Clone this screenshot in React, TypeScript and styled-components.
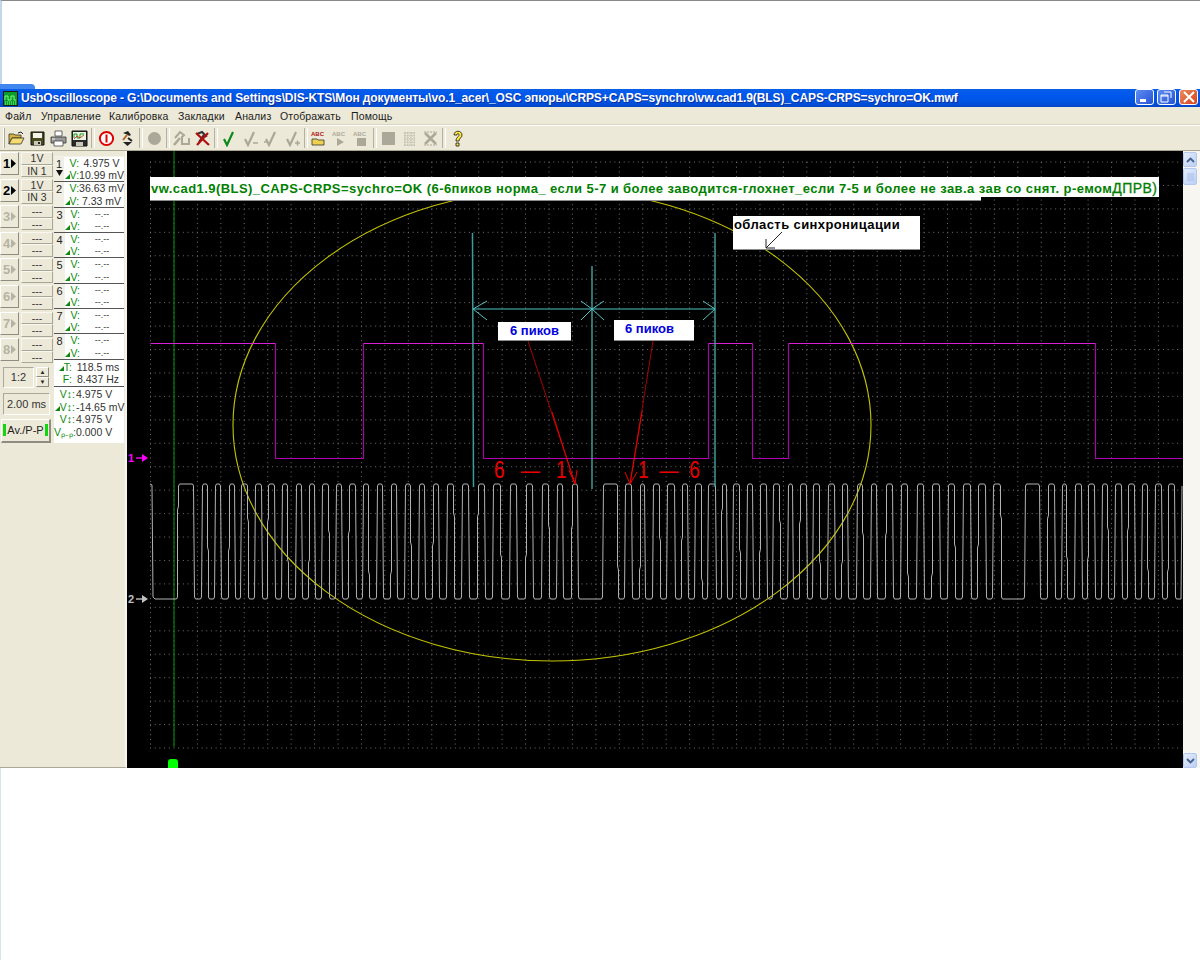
import React from "react";
import styled, { createGlobalStyle } from "styled-components";

const GlobalStyle = createGlobalStyle`
  html, body {
    margin: 0;
    padding: 0;
    background: #ffffff;
    overflow: hidden;
  }
  * {
    box-sizing: border-box;
  }
`;

const Page = styled.div`
  width: 1200px;
  height: 960px;
  display: flex;
  flex-direction: column;
  background: #ffffff;
  font-family: "Liberation Sans", Arial, sans-serif;
`;

const TopBand = styled.div`
  height: 84px;
  border-top: 1px solid #8a8a8a;
  border-left: 2px solid #c4d6ee;
`;

const TitleTab = styled.div`
  width: 35px;
  height: 5px;
  background: #3f86ee;
  border-top-right-radius: 4px;
`;

const AppWindow = styled.div`
  height: 679px;
  display: flex;
  flex-direction: column;
  background: #ece9d8;
`;

const TitleBar = styled.div`
  height: 18px;
  display: flex;
  align-items: center;
  padding: 0 2px 0 3px;
  background: linear-gradient(180deg, #0a5fe6 0%, #0058ee 30%, #0054e3 70%, #0346c6 100%);
`;

const TitleText = styled.div`
  flex: 1;
  margin-left: 3px;
  color: #ffffff;
  font-size: 12px;
  font-weight: 700;
  letter-spacing: -0.11px;
  white-space: nowrap;
  text-shadow: 1px 1px 0 #0a2f9c;
`;

const WindowButton = styled.div<{ $close?: boolean }>`
  width: 19px;
  height: 16px;
  margin: 0 0 2px 3px;
  display: flex;
  align-items: center;
  justify-content: center;
  border: 1px solid #ffffff;
  border-radius: 3px;
  background: ${(p) =>
    p.$close
      ? "linear-gradient(135deg, #ea8a62, #d8431c)"
      : "linear-gradient(135deg, #5f8cf0, #2454d8)"};
`;

const MenuBar = styled.div`
  height: 18px;
  display: flex;
  align-items: center;
  padding-left: 5px;
  border-bottom: 1px solid #d8d4c0;
`;

const MenuItem = styled.span<{ $w: number }>`
  width: ${(p) => p.$w}px;
  font-size: 10.5px;
  letter-spacing: 0.15px;
  color: #1c1c1c;
  white-space: nowrap;
`;

const ToolBar = styled.div`
  height: 26px;
  display: flex;
  align-items: center;
  padding-left: 6px;
  border-top: 1px solid #ffffff;
  border-bottom: 1px solid #a8a590;
`;

const Gripper = styled.div`
  width: 2px;
  height: 20px;
  margin: 0 1px 0 -3px;
  border-left: 1px solid #ffffff;
  border-right: 1px solid #aca899;
`;

const ToolButton = styled.div`
  width: 21px;
  height: 20px;
  display: flex;
  align-items: center;
  justify-content: center;
`;

const ToolSep = styled.div`
  width: 6px;
  height: 20px;
  display: flex;
  justify-content: center;
  &::after {
    content: "";
    width: 2px;
    height: 100%;
    border-left: 1px solid #b4b19f;
    border-right: 1px solid #ffffff;
  }
`;

const Main = styled.div`
  flex: 1;
  min-height: 0;
  display: flex;
`;

const Sidebar = styled.div`
  width: 127px;
  display: flex;
  padding-top: 1px;
  border-right: 2px solid #f6f5ee;
  border-bottom: 1px solid #aca899;
  background: #ece9d8;
`;

const ChannelColumn = styled.div`
  width: 53px;
  display: flex;
  flex-direction: column;
`;

const ChannelRow = styled.div`
  height: 26.6px;
  display: flex;
  gap: 2px;
`;

const ChannelButton = styled.div<{ $on: boolean }>`
  width: 19px;
  height: 23px;
  display: flex;
  align-items: center;
  justify-content: center;
  gap: 1px;
  font-size: 13px;
  font-weight: 700;
  color: ${(p) => (p.$on ? "#000000" : "#b6b3a2")};
  background: #ece9d8;
  border-top: 1px solid #ffffff;
  border-left: 1px solid #ffffff;
  border-right: 1px solid #8f8d80;
  border-bottom: 1px solid #8f8d80;
`;

const ChannelInfo = styled.div`
  width: 32px;
  height: 25px;
  display: flex;
  flex-direction: column;
`;

const ChannelCell = styled.div`
  height: 50%;
  display: flex;
  align-items: center;
  justify-content: center;
  font-size: 10.5px;
  line-height: 1;
  color: #333333;
  border-top: 1px solid #f8f7f0;
  border-left: 1px solid #f8f7f0;
  border-right: 1px solid #a9a796;
  border-bottom: 1px solid #a9a796;
`;

const RatioRow = styled.div`
  display: flex;
  gap: 2px;
  margin: 2px 0 0 3px;
`;

const SunkenBox = styled.div<{ $w: number; $h: number }>`
  width: ${(p) => p.$w}px;
  height: ${(p) => p.$h}px;
  display: flex;
  align-items: center;
  justify-content: center;
  font-size: 11px;
  color: #333333;
  border-top: 1px solid #aca899;
  border-left: 1px solid #aca899;
  border-right: 1px solid #ffffff;
  border-bottom: 1px solid #ffffff;
`;

const SpinColumn = styled.div`
  display: flex;
  flex-direction: column;
`;

const SpinButton = styled.div`
  width: 13px;
  height: 10px;
  display: flex;
  align-items: center;
  justify-content: center;
  font-size: 6px;
  color: #222222;
  border-top: 1px solid #ffffff;
  border-left: 1px solid #ffffff;
  border-right: 1px solid #8f8d80;
  border-bottom: 1px solid #8f8d80;
`;

const SpeedBox = styled(SunkenBox)`
  margin: 5px 0 0 3px;
`;

const ModeButton = styled.div`
  width: 50px;
  height: 24px;
  margin: 4px 0 0 1px;
  display: flex;
  align-items: center;
  justify-content: center;
  gap: 1px;
  font-size: 11px;
  color: #222222;
  border-top: 1px solid #ffffff;
  border-left: 1px solid #ffffff;
  border-right: 2px solid #8f8d80;
  border-bottom: 2px solid #8f8d80;
`;

const ModeBar = styled.span`
  width: 3px;
  height: 12px;
  background: #0fd80f;
`;

const ReadoutPanel = styled.div`
  width: 70px;
  height: 287px;
  margin: 4px 0 0 1px;
  background: #ffffff;
  border-top: 1px solid #f4f3ea;
`;

const ReadoutRow = styled.div`
  height: 25.35px;
  display: flex;
  border-bottom: 1px solid #555555;
`;

const ReadoutNumber = styled.div`
  width: 11px;
  display: flex;
  flex-direction: column;
  align-items: center;
  padding-top: 2px;
  font-size: 11px;
  line-height: 11px;
  color: #222222;
  background: #f1efe3;
`;

const ReadoutLines = styled.div`
  flex: 1;
  display: flex;
  flex-direction: column;
  justify-content: space-around;
`;

const ReadoutLine = styled.div`
  display: flex;
  align-items: center;
  height: 12px;
  font-size: 10.5px;
  line-height: 12px;
  color: #333333;
  white-space: nowrap;
`;

const ReadoutTag = styled.span<{ $w?: number }>`
  width: ${(p) => p.$w ?? 15}px;
  flex: none;
  text-align: right;
  color: #0d8a0d;
  font-size: 10.5px;
`;

const ReadoutValue = styled.span<{ $dim?: boolean }>`
  flex: 1;
  text-align: center;
  font-size: ${(p) => (p.$dim ? "9px" : "10.5px")};
`;

const TimeBlock = styled.div`
  height: 27px;
  padding: 1px 0 0 3px;
  border-bottom: 1px solid #555555;
`;

const StatsBlock = styled.div`
  padding: 1px 0 0 0;
`;

const StatLine = styled(ReadoutLine)`
  height: 12.6px;
  gap: 1px;
`;

const Scope = styled.div`
  flex: 1;
  position: relative;
  background: #000000;
  overflow: hidden;
`;

const ScopeChart = styled.svg`
  display: block;
  width: 100%;
  height: 100%;
`;

const Banner = styled.div`
  position: absolute;
  left: 23px;
  top: 26px;
  width: 1009px;
  height: 20px;
  background: #ffffff;
  color: #008000;
  font-size: 13px;
  font-weight: 700;
  line-height: 23px;
  letter-spacing: 0.44px;
  white-space: nowrap;
`;

const BannerEdge = styled.div`
  position: absolute;
  left: 23px;
  top: 26px;
  width: 831px;
  height: 24px;
  background: #ffffff;
  border-bottom: 1px solid #8c8c8c;
`;

const BannerText = styled.span`
  margin-left: 1px;
`;

const BannerTail = styled.span`
  font-weight: 400;
  font-size: 14px;
  -webkit-text-stroke: 0.3px #008000;
`;

const NoteBox = styled.div`
  position: absolute;
  left: 606px;
  top: 65px;
  width: 187px;
  height: 34px;
  padding-left: 1px;
  background: #ffffff;
  border-bottom: 1px solid #8c8c8c;
  color: #000000;
  font-size: 13px;
  font-weight: 700;
  line-height: 18px;
  letter-spacing: 0.4px;
`;

const NoteArrow = styled.svg`
  position: absolute;
  left: 32px;
  top: 15px;
`;

const PeakLabel = styled.div<{ $left: number; $top: number; $w: number; $h: number; $pad: number }>`
  position: absolute;
  left: ${(p) => p.$left}px;
  top: ${(p) => p.$top}px;
  width: ${(p) => p.$w}px;
  height: ${(p) => p.$h}px;
  padding-left: ${(p) => p.$pad}px;
  background: #ffffff;
  color: #0000e0;
  font-size: 13px;
  font-weight: 700;
  line-height: 18px;
  border-bottom: 1px solid #8c8c8c;
`;

const PeakCount = styled.div<{ $left: number }>`
  position: absolute;
  left: ${(p) => p.$left}px;
  top: 305px;
  color: #e80000;
  font-size: 24px;
  line-height: 28px;
  white-space: pre;
  transform: scaleX(0.8);
  transform-origin: left center;
`;

const ChannelMarker = styled.div<{ $top: number; $color: string }>`
  position: absolute;
  left: 1px;
  top: ${(p) => p.$top}px;
  display: flex;
  align-items: center;
  gap: 2px;
  color: ${(p) => p.$color};
  font-size: 11px;
  font-weight: 700;
  line-height: 12px;
`;

const TriggerThumb = styled.div`
  position: absolute;
  left: 41px;
  bottom: 0;
  width: 10px;
  height: 9px;
  background: #00ff00;
  border-radius: 3px 3px 0 0;
`;

const ScrollBar = styled.div`
  width: 17px;
  display: flex;
  flex-direction: column;
  padding-right: 3px;
  background: #f7f6f0;
`;

const ScrollButton = styled.div`
  height: 15px;
  margin-top: 1px;
  display: flex;
  align-items: center;
  justify-content: center;
  border: 1px solid #b4c8f0;
  border-radius: 2px;
  background: linear-gradient(135deg, #e4edfc, #bccff4);
`;

const ScrollThumb = styled(ScrollButton)`
  height: 17px;
`;

const ScrollTrack = styled.div`
  flex: 1;
`;

const BottomBand = styled.div`
  flex: 1;
  border-left: 1px solid #d8e6e0;
`;

const titleText =
  "UsbOscilloscope - G:\\Documents and Settings\\DIS-KTS\\Мон документы\\vo.1_acer\\_OSC эпюры\\CRPS+CAPS=synchro\\vw.cad1.9(BLS)_CAPS-CRPS=sychro=OK.mwf";

const menuItems: [string, number][] = [
  ["Файл", 36],
  ["Управление", 68],
  ["Калибровка", 69],
  ["Закладки", 57],
  ["Анализ", 45],
  ["Отображать", 71],
  ["Помощь", 50],
];

// [rise, fall] of channel 2, in page pixels
const pulses: [number, number][] = [
  [178, 194], [202, 208], [215, 221], [229, 235], [241, 248], [255, 262], [268, 275], [282, 288],
  [296, 302], [309, 315], [322, 329], [336, 342], [349, 356], [363, 369], [377, 383], [391, 397],
  [405, 411], [419, 425], [433, 439], [447, 454], [462, 469], [478, 485], [493, 501], [510, 517],
  [526, 533], [542, 549], [557, 563], [572, 578], [603, 618], [625, 632], [640, 645], [653, 660],
  [667, 675], [682, 688], [695, 702], [708, 716], [722, 727], [733, 740], [747, 753], [760, 767],
  [773, 780], [788, 793], [800, 807], [813, 820], [828, 835], [842, 848], [857, 863], [871, 877],
  [886, 893], [901, 908], [917, 924], [932, 940], [948, 955], [963, 971], [978, 986], [993, 1001],
  [1025, 1040], [1048, 1055], [1062, 1067], [1075, 1082], [1088, 1095], [1102, 1108], [1115, 1122],
  [1128, 1135], [1142, 1148], [1155, 1162], [1168, 1175],
];

function buildGreyTrace() {
  let d = "M150 484 L152 485 L153 597 L155 599";
  pulses.forEach(([rise, fall], i) => {
    const k = 510 + ((i * 37) % 70);
    d += ` L${rise - 1.5} 599 L${rise - 0.5} 597`;
    d += i % 3 === 0 ? ` L${rise - 0.5} ${k} L${rise + 0.5} ${k - 4}` : "";
    d += ` L${rise + 0.5} 486 L${rise + 1.5} 484`;
    d += ` L${fall - 1.5} 484 L${fall - 0.5} 486`;
    d += i % 3 === 1 ? ` L${fall - 0.5} ${k} L${fall + 0.5} ${k + 4}` : "";
    d += ` L${fall + 0.5} 597 L${fall + 1.5} 599`;
  });
  d += " L1181 599 L1182 486";
  return d;
}

const magentaHigh = "M150 343 L275 343 M363 343 L483 343 M708 343 L752 343 M788 343 L1095 343";
const magentaLow =
  "M275 343 L275 458 L363 458 L363 343 M483 343 L483 458 L708 458 L708 343 M752 343 L752 458 L788 458 L788 343 M1095 343 L1095 458 L1182 458";

const gridXs = Array.from({ length: 44 }, (_, i) => 150.5 + i * 23.44);
const gridYs = Array.from({ length: 26 }, (_, i) => 162 + i * 23.44);

function ScopeDrawing() {
  return (
    <ScopeChart viewBox="127 151 1056 617" preserveAspectRatio="none">
      <g stroke="#707070" strokeWidth="1" strokeDasharray="1 3.69" fill="none">
        {gridYs.map((y) => (
          <line key={y} x1="150" y1={y} x2="1182" y2={y} />
        ))}
        {gridXs.map((x) => (
          <line key={x} x1={x} y1="162" x2={x} y2="747" />
        ))}
      </g>
      <line x1="174" y1="151" x2="174" y2="747" stroke="#008000" strokeWidth="1.2" />
      <ellipse cx="552" cy="425" rx="319" ry="236" fill="none" stroke="#c4c400" strokeWidth="1.1" />
      <g transform="translate(0.5 0.5)" fill="none" strokeWidth="1.1">
        <path d={magentaLow} stroke="#b000b0" />
        <path d={magentaHigh} stroke="#d820d8" />
      </g>
      <path d={buildGreyTrace()} fill="none" stroke="#b2b2b2" strokeWidth="1" />
      <g fill="none" stroke="#3f9a9a" strokeWidth="1.5">
        <line x1="472.5" y1="233" x2="473.5" y2="487" />
        <line x1="592" y1="266" x2="592" y2="489" />
        <line x1="715" y1="233" x2="715" y2="487" />
      </g>
      <g fill="none" stroke="#52c4c4" strokeWidth="1">
        <line x1="473" y1="309" x2="715" y2="309" />
        <path d="M487 301 L473 309 L487 320" />
        <path d="M581 301 L592 309 L581 320" />
        <path d="M604 301 L592 309 L604 320" />
        <path d="M703 320 L715 309 L703 301" />
      </g>
      <g fill="none" stroke="#a80000" strokeWidth="1">
        <line x1="528" y1="341" x2="575" y2="484" />
        <line x1="653" y1="341" x2="630" y2="484" />
      </g>
      <g fill="none" stroke="#f00000" strokeWidth="1">
        <path d="M569 470 L575 484 L577 470" />
        <path d="M625 472 L630 484 L637 472" />
        <line x1="552" y1="412" x2="575" y2="484" />
        <line x1="642" y1="412" x2="630" y2="484" />
      </g>
    </ScopeChart>
  );
}

function ToolIcon({ children }: { children: React.ReactNode }) {
  return (
    <ToolButton>
      <svg width="17" height="17" viewBox="0 0 17 17">
        {children}
      </svg>
    </ToolButton>
  );
}

const GREY = "#aca899";

function OpenIcon() {
  return (
    <ToolIcon>
      <path d="M1 4h5l1 1h6v3H4L1 14z" fill="#d6b23c" stroke="#333" strokeWidth="0.8" />
      <path d="M1 14L4 8h12l-3 6z" fill="#f4dc70" stroke="#333" strokeWidth="0.8" />
      <path d="M10 3l3-1 2 2" fill="none" stroke="#222" strokeWidth="1" />
    </ToolIcon>
  );
}

function SaveIcon() {
  return (
    <ToolIcon>
      <path d="M2 2h13v13H2z" fill="#4a4a20" stroke="#111" />
      <path d="M4 3h9v5H4z" fill="#f4f4ea" />
      <path d="M5 11h7v4H5z" fill="#c8c8b8" />
      <path d="M9 12h2v2H9z" fill="#222" />
    </ToolIcon>
  );
}

function PrintIcon() {
  return (
    <ToolIcon>
      <path d="M5 1h7v5H5z" fill="#fff" stroke="#444" strokeWidth="0.8" />
      <path d="M1 7h15v6H1z" fill="#9a9a9a" stroke="#333" strokeWidth="0.8" />
      <path d="M4 11h9v5H4z" fill="#fff" stroke="#444" strokeWidth="0.8" />
      <path d="M2 9h3" stroke="#eee" />
    </ToolIcon>
  );
}

function ScopeSaveIcon() {
  return (
    <ToolIcon>
      <path d="M1 1h15v15H1z" fill="#2a2a2a" stroke="#111" />
      <path d="M2 2h13v8H2z" fill="#e8f4e4" />
      <path d="M3 8V4h3v4h3V4h4" fill="none" stroke="#10a010" />
      <path d="M3 9l3-3 3 2 4-3" fill="none" stroke="#e02020" strokeWidth="0.8" />
      <path d="M5 12h7v4H5z" fill="#c8c8b8" />
    </ToolIcon>
  );
}

function StopIcon() {
  return (
    <ToolIcon>
      <circle cx="8.5" cy="8.5" r="6.6" fill="#fff" stroke="#e00000" strokeWidth="2" />
      <path d="M8.5 4.5v8" stroke="#e00000" strokeWidth="2" />
    </ToolIcon>
  );
}

function HammerIcon() {
  return (
    <ToolIcon>
      <path d="M4 3l5-2 3 4-2 1-1-1z" fill="#222" />
      <path d="M8 5L4 10" stroke="#b06020" strokeWidth="2" />
      <path d="M9 8l4 3" stroke="#222" strokeWidth="2" />
      <path d="M4 12h9l-4.5 4z" fill="#222" />
    </ToolIcon>
  );
}

function GreyDotIcon() {
  return (
    <ToolIcon>
      <circle cx="8.5" cy="8.5" r="6.5" fill={GREY} />
    </ToolIcon>
  );
}

function GreyToolIcon() {
  return (
    <ToolIcon>
      <path d="M2 8l5-6 4 3-2 2v7h7V8" fill="none" stroke={GREY} strokeWidth="2" />
      <path d="M1 15l6-7" stroke={GREY} strokeWidth="2.5" />
    </ToolIcon>
  );
}

function CrossedToolIcon() {
  return (
    <ToolIcon>
      <path d="M3 4l5-2 4 4-2 1-1-1-4 6" fill="none" stroke="#333" strokeWidth="2" />
      <path d="M2 3l13 12M14 3L3 15" stroke="#b01010" strokeWidth="2.2" />
    </ToolIcon>
  );
}

function CheckIcon({ tone, extra }: { tone: string; extra?: React.ReactNode }) {
  return (
    <ToolIcon>
      <path d="M3 9l3 6 6-13" fill="none" stroke={tone} strokeWidth="2.2" />
      {extra}
    </ToolIcon>
  );
}

function AbcIcon({ active, solid }: { active: boolean; solid?: boolean }) {
  const tone = active ? "#b01010" : GREY;
  return (
    <ToolIcon>
      <text x="0" y="6" fontSize="6" fontWeight="700" fontFamily="Liberation Sans, sans-serif" fill={tone}>
        ABC
      </text>
      {active && <path d="M1 9h5l1 1h6v5H1z" fill="#f0d050" stroke="#333" strokeWidth="0.8" />}
      {!active && !solid && <path d="M5 8l7 4-7 4z" fill={GREY} />}
      {!active && solid && <path d="M4 8h9v8H4z" fill={GREY} />}
    </ToolIcon>
  );
}

function SquareIcon() {
  return (
    <ToolIcon>
      <path d="M2 2h13v13H2z" fill={GREY} />
    </ToolIcon>
  );
}

function TinyGridIcon() {
  return (
    <ToolIcon>
      <path d="M3 3h11M3 6h11M3 9h11M3 12h11M3 15h11M4 2v14M7 2v14M10 2v14M13 2v14" stroke={GREY} strokeWidth="0.8" strokeDasharray="1.5 1" />
    </ToolIcon>
  );
}

function GreyCrossIcon() {
  return (
    <ToolIcon>
      <path d="M3 3l11 11M14 3L3 14" stroke={GREY} strokeWidth="2.5" />
      <path d="M2 2h13M2 15h13" stroke={GREY} strokeWidth="1" strokeDasharray="2 1" />
    </ToolIcon>
  );
}

function HelpIcon() {
  return (
    <ToolIcon>
      <path d="M5 5c0-5 8-5 8 0 0 3-3 3-3 6H7c0-4 3-4 3-6 0-2-2-2-2 0z" fill="#ffe840" stroke="#111" strokeWidth="0.8" />
      <path d="M7 13h3v3H7z" fill="#ffe840" stroke="#111" strokeWidth="0.8" />
    </ToolIcon>
  );
}

function DeltaTag({ label = "V:", w }: { label?: string; w?: number }) {
  return (
    <ReadoutTag $w={w}>
      <svg width="5" height="5" viewBox="0 0 5 5">
        <path d="M0 5L5 0v5z" fill="#0d8a0d" />
      </svg>
      {label}
    </ReadoutTag>
  );
}

function MarkerArrow({ tone }: { tone: string }) {
  return (
    <svg width="12" height="8" viewBox="0 0 12 8">
      <path d="M0 4h7" stroke={tone} strokeWidth="1.4" />
      <path d="M6 0l6 4-6 4z" fill={tone} />
    </svg>
  );
}

const channels = [
  { n: 1, on: true, a: "1V", b: "IN 1", v: "4.975 V", d: "10.99 mV" },
  { n: 2, on: true, a: "1V", b: "IN 3", v: "36.63 mV", d: "7.33 mV" },
  { n: 3, on: false, a: "---", b: "---", v: "--.--", d: "--.--" },
  { n: 4, on: false, a: "---", b: "---", v: "--.--", d: "--.--" },
  { n: 5, on: false, a: "---", b: "---", v: "--.--", d: "--.--" },
  { n: 6, on: false, a: "---", b: "---", v: "--.--", d: "--.--" },
  { n: 7, on: false, a: "---", b: "---", v: "--.--", d: "--.--" },
  { n: 8, on: false, a: "---", b: "---", v: "--.--", d: "--.--" },
];

function ArrowGlyph({ tone }: { tone: string }) {
  return (
    <svg width="5" height="9" viewBox="0 0 5 9">
      <path d="M0 0l5 4.5L0 9z" fill={tone} />
    </svg>
  );
}

export default function App() {
  return (
    <Page>
      <GlobalStyle />
      <TopBand />
      <TitleTab />
      <AppWindow>
        <TitleBar>
          <svg width="15" height="15" viewBox="0 0 15 15">
            <path d="M0 0h15v15H0z" fill="#1a1a1a" />
            <path d="M1 1h13v13H1z" fill="#0c9c2c" />
            <path d="M2 9V5h3v4h3V5h3v4h2" fill="none" stroke="#7dff7d" />
            <path d="M2 11h11M2 13h11" stroke="#7dff7d" strokeDasharray="1 1" />
          </svg>
          <TitleText>{titleText}</TitleText>
          <WindowButton>
            <svg width="11" height="11" viewBox="0 0 11 11">
              <path d="M1 7h6v3H1z" fill="#ffffff" />
            </svg>
          </WindowButton>
          <WindowButton>
            <svg width="13" height="12" viewBox="0 0 13 12">
              <path d="M4 1h7v6M1 4h7v7H1zM1 5h7" fill="none" stroke="#ffffff" />
            </svg>
          </WindowButton>
          <WindowButton $close>
            <svg width="12" height="12" viewBox="0 0 12 12">
              <path d="M1 1l10 10M11 1L1 11" stroke="#ffffff" strokeWidth="2" />
            </svg>
          </WindowButton>
        </TitleBar>
        <MenuBar>
          {menuItems.map(([label, w]) => (
            <MenuItem key={label} $w={w}>
              {label}
            </MenuItem>
          ))}
        </MenuBar>
        <ToolBar>
          <Gripper />
          <OpenIcon />
          <SaveIcon />
          <PrintIcon />
          <ScopeSaveIcon />
          <ToolSep />
          <StopIcon />
          <HammerIcon />
          <ToolSep />
          <GreyDotIcon />
          <ToolSep />
          <GreyToolIcon />
          <CrossedToolIcon />
          <ToolSep />
          <CheckIcon tone="#0a8a1a" />
          <CheckIcon tone={GREY} extra={<path d="M11 13h5" stroke={GREY} strokeWidth="1.5" />} />
          <CheckIcon tone={GREY} extra={<path d="M1 12h4" stroke={GREY} strokeWidth="1.5" />} />
          <CheckIcon tone={GREY} extra={<path d="M11 13h5M13.5 10.5v5" stroke={GREY} strokeWidth="1.5" />} />
          <ToolSep />
          <AbcIcon active />
          <AbcIcon active={false} />
          <AbcIcon active={false} solid />
          <ToolSep />
          <SquareIcon />
          <TinyGridIcon />
          <GreyCrossIcon />
          <ToolSep />
          <HelpIcon />
        </ToolBar>
        <Main>
          <Sidebar>
            <ChannelColumn>
              {channels.map((c) => (
                <ChannelRow key={c.n}>
                  <ChannelButton $on={c.on}>
                    {c.n}
                    <ArrowGlyph tone={c.on ? "#000000" : "#b6b3a2"} />
                  </ChannelButton>
                  <ChannelInfo>
                    <ChannelCell>{c.a}</ChannelCell>
                    <ChannelCell>{c.b}</ChannelCell>
                  </ChannelInfo>
                </ChannelRow>
              ))}
              <RatioRow>
                <SunkenBox $w={31} $h={21}>
                  1:2
                </SunkenBox>
                <SpinColumn>
                  <SpinButton>▲</SpinButton>
                  <SpinButton>▼</SpinButton>
                </SpinColumn>
              </RatioRow>
              <SpeedBox $w={47} $h={22}>
                2.00 ms
              </SpeedBox>
              <ModeButton>
                <ModeBar />
                Av./P-P
                <ModeBar />
              </ModeButton>
            </ChannelColumn>
            <ReadoutPanel>
              {channels.map((c) => (
                <ReadoutRow key={c.n}>
                  <ReadoutNumber>
                    {c.n}
                    {c.n === 1 && (
                      <svg width="7" height="6" viewBox="0 0 7 6">
                        <path d="M0 0h7L3.5 6z" fill="#111111" />
                      </svg>
                    )}
                  </ReadoutNumber>
                  <ReadoutLines>
                    <ReadoutLine>
                      <ReadoutTag>V:</ReadoutTag>
                      <ReadoutValue $dim={!c.on}>{c.v}</ReadoutValue>
                    </ReadoutLine>
                    <ReadoutLine>
                      <DeltaTag />
                      <ReadoutValue $dim={!c.on}>{c.d}</ReadoutValue>
                    </ReadoutLine>
                  </ReadoutLines>
                </ReadoutRow>
              ))}
              <TimeBlock>
                <ReadoutLine>
                  <DeltaTag label="T:" />
                  <ReadoutValue>118.5 ms</ReadoutValue>
                </ReadoutLine>
                <ReadoutLine>
                  <ReadoutTag>F:</ReadoutTag>
                  <ReadoutValue>8.437 Hz</ReadoutValue>
                </ReadoutLine>
              </TimeBlock>
              <StatsBlock>
                <StatLine>
                  <ReadoutTag $w={21}>V↕:</ReadoutTag>
                  4.975 V
                </StatLine>
                <StatLine>
                  <DeltaTag label="V↕:" w={21} />
                  -14.65 mV
                </StatLine>
                <StatLine>
                  <ReadoutTag $w={21}>V↕:</ReadoutTag>
                  4.975 V
                </StatLine>
                <StatLine>
                  <ReadoutTag $w={21}>Vₚ₋ₚ:</ReadoutTag>
                  0.000 V
                </StatLine>
              </StatsBlock>
            </ReadoutPanel>
          </Sidebar>
          <Scope>
            <ScopeDrawing />
            <BannerEdge />
            <Banner>
              <BannerText>
                vw.cad1.9(BLS)_CAPS-CRPS=sychro=OK (6-6пиков норма_ если 5-7 и более заводится-глохнет_если 7-5 и более не зав.а зав со снят. р-емом
                <BannerTail>ДПРВ)</BannerTail>
              </BannerText>
            </Banner>
            <NoteBox>
              область синхроницации
              <NoteArrow width="18" height="18" viewBox="0 0 18 18">
                <path d="M17 1L1 17" stroke="#222222" fill="none" />
                <path d="M1 8v9h9" stroke="#222222" fill="none" />
              </NoteArrow>
            </NoteBox>
            <PeakLabel $left={371} $top={171} $w={73} $h={19} $pad={12}>
              6 пиков
            </PeakLabel>
            <PeakLabel $left={487} $top={169} $w={80} $h={21} $pad={11}>
              6 пиков
            </PeakLabel>
            <PeakCount $left={367}>6   —   1</PeakCount>
            <PeakCount $left={511}>1  —  6</PeakCount>
            <ChannelMarker $top={301} $color="#ff00ff">
              1
              <MarkerArrow tone="#ff00ff" />
            </ChannelMarker>
            <ChannelMarker $top={442} $color="#c0c0c0">
              2
              <MarkerArrow tone="#c0c0c0" />
            </ChannelMarker>
            <TriggerThumb />
          </Scope>
          <ScrollBar>
            <ScrollButton>
              <svg width="9" height="6" viewBox="0 0 9 6">
                <path d="M1 5l3.5-3.5L8 5" fill="none" stroke="#44608c" strokeWidth="1.8" />
              </svg>
            </ScrollButton>
            <ScrollThumb>
              <svg width="7" height="8" viewBox="0 0 7 8">
                <path d="M0 1h7M0 3h7M0 5h7M0 7h7" stroke="#a8bce8" />
              </svg>
            </ScrollThumb>
            <ScrollTrack />
            <ScrollButton>
              <svg width="9" height="6" viewBox="0 0 9 6">
                <path d="M1 1l3.5 3.5L8 1" fill="none" stroke="#44608c" strokeWidth="1.8" />
              </svg>
            </ScrollButton>
          </ScrollBar>
        </Main>
      </AppWindow>
      <BottomBand />
    </Page>
  );
}
